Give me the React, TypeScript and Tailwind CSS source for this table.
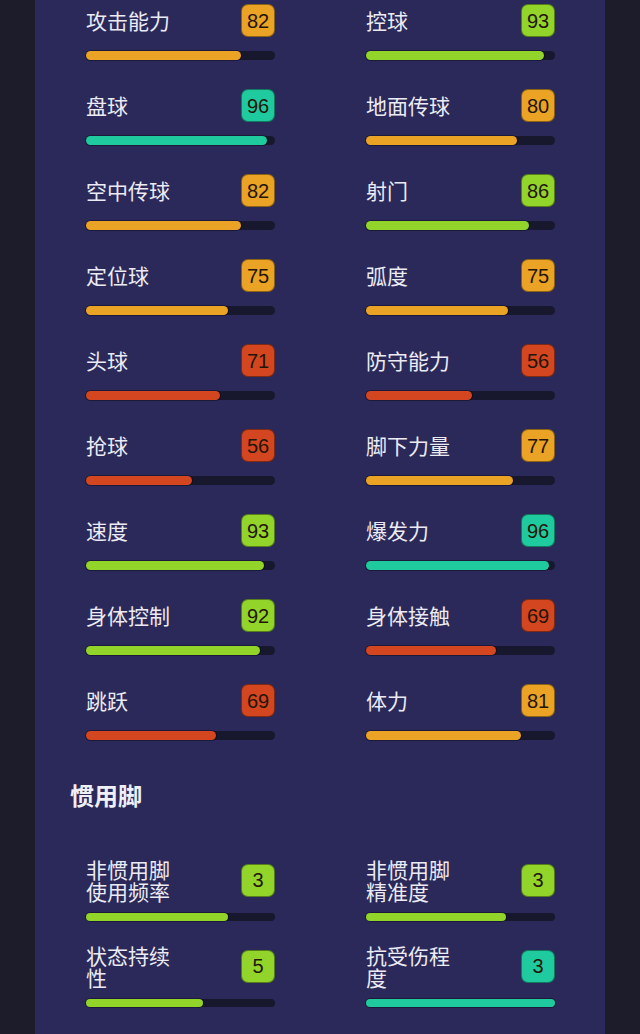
import React from 'react';

type Stat = { label: string; value: number; pct: number; color: string };

const colors: Record<string, string> = {
  orange: 'bg-[#eaa324]',
  green: 'bg-[#92d42a]',
  teal: 'bg-[#1fcb9e]',
  red: 'bg-[#d4461f]',
};

const stats: Stat[] = [
  { label: '攻击能力', value: 82, pct: 82, color: 'orange' },
  { label: '控球', value: 93, pct: 94, color: 'green' },
  { label: '盘球', value: 96, pct: 96, color: 'teal' },
  { label: '地面传球', value: 80, pct: 80, color: 'orange' },
  { label: '空中传球', value: 82, pct: 82, color: 'orange' },
  { label: '射门', value: 86, pct: 86, color: 'green' },
  { label: '定位球', value: 75, pct: 75, color: 'orange' },
  { label: '弧度', value: 75, pct: 75, color: 'orange' },
  { label: '头球', value: 71, pct: 71, color: 'red' },
  { label: '防守能力', value: 56, pct: 56, color: 'red' },
  { label: '抢球', value: 56, pct: 56, color: 'red' },
  { label: '脚下力量', value: 77, pct: 78, color: 'orange' },
  { label: '速度', value: 93, pct: 94, color: 'green' },
  { label: '爆发力', value: 96, pct: 97, color: 'teal' },
  { label: '身体控制', value: 92, pct: 92, color: 'green' },
  { label: '身体接触', value: 69, pct: 69, color: 'red' },
  { label: '跳跃', value: 69, pct: 69, color: 'red' },
  { label: '体力', value: 81, pct: 82, color: 'orange' },
];

const footStats: Stat[] = [
  { label: '非惯用脚使用频率', value: 3, pct: 75, color: 'green' },
  { label: '非惯用脚精准度', value: 3, pct: 74, color: 'green' },
  { label: '状态持续性', value: 5, pct: 62, color: 'green' },
  { label: '抗受伤程度', value: 3, pct: 100, color: 'teal' },
];

function Badge({ value, color }: { value: number; color: string }) {
  return (
    <div
      className={`${colors[color]} w-[34px] h-[33px] rounded-[7px] border border-black/40 flex items-center justify-center text-[20px] text-[#231509] font-['Liberation_Sans',sans-serif]`}
    >
      {value}
    </div>
  );
}

function Bar({ pct, color, thin }: { pct: number; color: string; thin?: boolean }) {
  return (
    <div className={`w-full ${thin ? 'h-[8px]' : 'h-[9px]'} rounded-full bg-[#17172e]`}>
      <div
        className={`${colors[color]} h-full rounded-full shadow-[0_0_0_1px_rgba(0,0,0,0.35)]`}
        style={{ width: `${pct}%` }}
      />
    </div>
  );
}

export default function App() {
  return (
    <div className="min-h-screen bg-[#1c1c2b] font-['Noto_Sans_CJK_SC',sans-serif]">
      <div className="ml-[35px] w-[570px] min-h-[1034px] bg-[#2a2959] pt-[4px] pb-10 px-[35px]">
        <div className="grid grid-cols-[189px_189px] gap-x-[91px] gap-y-[29px] px-[16px]">
          {stats.map((s) => (
            <div key={s.label}>
              <div className="flex items-center justify-between h-[33px]">
                <span className="text-[21px] text-[#ecebf3] leading-none">{s.label}</span>
                <Badge value={s.value} color={s.color} />
              </div>
              <div className="mt-[14px]">
                <Bar pct={s.pct} color={s.color} />
              </div>
            </div>
          ))}
        </div>

        <h2 className="mt-[39px] text-[24px] leading-[32px] font-bold text-[#f0eff6]">惯用脚</h2>

        <div className="mt-[47px] grid grid-cols-[189px_189px] gap-x-[91px] gap-y-[23px] px-[16px]">
          {footStats.map((s) => (
            <div key={s.label}>
              <div className="flex items-center justify-between h-[44px]">
                <span className="w-[92px] text-[21px] leading-[22px] text-[#ecebf3]">{s.label}</span>
                <Badge value={s.value} color={s.color} />
              </div>
              <div className="mt-[11px]">
                <Bar pct={s.pct} color={s.color} thin />
              </div>
            </div>
          ))}
        </div>
      </div>
    </div>
  );
}
